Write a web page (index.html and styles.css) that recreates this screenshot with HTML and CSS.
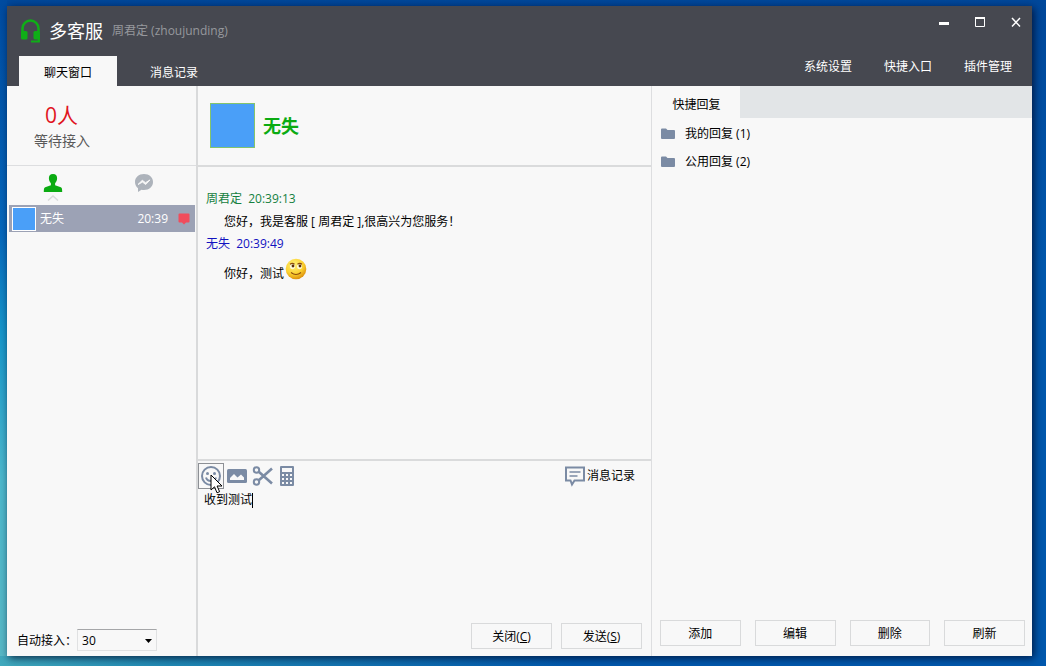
FILE: index.html
```html
<!DOCTYPE html>
<html lang="zh-CN">
<head>
<meta charset="utf-8">
<title>多客服</title>
<link rel="stylesheet" href="styles.css">
</head>
<body>
<div class="window">
  <header class="header">
    <div class="titlebar">
      <svg class="logo" viewBox="0 0 22 26" width="22" height="26">
        <path d="M2.500 15V10.500a8 8 0 0 1 16 0V15" fill="none" stroke="#0fae17" stroke-width="2.600"/>
        <rect x="1" y="13" width="6.500" height="8.500" rx="1.500" fill="#0fae17"/>
        <rect x="13.500" y="13" width="6.500" height="8.500" rx="1.500" fill="#0fae17"/>
        <path d="M18.800 20v3.500H11" fill="none" stroke="#0fae17" stroke-width="2.200"/>
      </svg>
      <h1 class="app-name">多客服</h1>
      <span class="account">周君定 (zhoujunding)</span>
      <div class="window-controls">
        <button class="control" aria-label="最小化"><svg viewBox="0 0 12 12" width="12" height="12"><path d="M1 7.500h10" stroke="#fff" stroke-width="3"/></svg></button>
        <button class="control" aria-label="最大化"><svg viewBox="0 0 12 12" width="12" height="12"><path d="M1.500 2v8.500h9V2" fill="none" stroke="#fff"/><path d="M1 2h10" stroke="#fff" stroke-width="2"/></svg></button>
        <button class="control" aria-label="关闭窗口"><svg viewBox="0 0 12 12" width="12" height="12"><path d="M2 2l8 8.500M10 2l-8 8.500" stroke="#fff" stroke-width="1.500"/></svg></button>
      </div>
    </div>
    <nav class="nav">
      <a class="tab tab-active" href="#chat">聊天窗口</a>
      <a class="tab" href="#history">消息记录</a>
      <div class="menu">
        <a href="#settings">系统设置</a>
        <a href="#shortcuts">快捷入口</a>
        <a href="#plugins">插件管理</a>
      </div>
    </nav>
  </header>
  <main class="main">
    <aside class="sidebar">
      <section class="waiting">
        <p class="waiting-count">0人</p>
        <p class="waiting-label">等待接入</p>
      </section>
      <div class="list-tabs">
        <button class="list-tab" aria-label="客户">
          <svg viewBox="0 0 20 20" width="20" height="20"><path d="M10 1c3 0 4.300 2 4.100 4.600-.1 2.200-1 3.600-2 4.700v1.900l5.700 2c1.100.5 1.400 1.400 1.400 4.800H.8c0-3.400.3-4.300 1.400-4.800l5.700-2v-1.900c-1-1.100-1.900-2.500-2-4.700C5.700 3 7 1 10 1z" fill="#0bab12"/></svg>
          <svg class="list-mark" viewBox="0 0 12 6" width="12" height="6"><path d="M1 5.500L6 1l5 4.500" fill="none" stroke="#d9dadb" stroke-width="1.500"/></svg>
        </button>
        <button class="list-tab" aria-label="会话">
          <svg viewBox="0 0 20 20" width="20" height="20"><path d="M10 1c5.200 0 9 3.400 9 8s-3.800 8-9 8c-.9 0-1.700-.1-2.500-.3L4 19v-3.800C2.100 13.700 1 11.500 1 9c0-4.600 3.800-8 9-8z" fill="#adb3bb"/><path d="M4 11.500l4.300-4.200 3.200 2.400 4.500-2.800-4.300 4.600-3.200-2.400z" fill="#f8f8f8" stroke="#f8f8f8"/></svg>
        </button>
      </div>
      <button class="contact">
        <span class="contact-avatar"></span>
        <span class="contact-name">无失</span>
        <span>20:39</span>
        <svg viewBox="0 0 12 12" width="12" height="12"><path d="M1.500.5h9q1 0 1 1v7q0 1-1 1H8l-2 2-2-2H1.500q-1 0-1-1v-7q0-1 1-1z" fill="#f04c5c"/></svg>
      </button>
      <div class="auto-accept">
        <label for="auto">自动接入<span class="punct">：</span></label>
        <span class="select-box">
          <select id="auto"><option>30</option></select>
          <svg class="select-arrow" viewBox="0 0 7 4" width="7" height="4"><path d="M0 0h7L3.500 4z" fill="#000"/></svg>
        </span>
      </div>
    </aside>
    <section class="chat">
      <div class="chat-head">
        <span class="chat-avatar"></span>
        <h2 class="chat-name">无失</h2>
      </div>
      <div class="messages">
        <p class="sender sender-self">周君定&nbsp; 20:39:13</p>
        <p class="message">您好，我是客服 [ 周君定 ],很高兴为您服务<span class="punct">！</span></p>
        <p class="sender sender-peer">无失&nbsp; 20:39:49</p>
        <p class="message message-emoji">你好，测试<svg class="emoji" viewBox="0 0 22 22" width="22" height="22">
          <defs><radialGradient id="face" cx=".4" cy=".3" r=".75"><stop offset="0" stop-color="#fff27a"/><stop offset=".6" stop-color="#fbd02f"/><stop offset="1" stop-color="#d88708"/></radialGradient></defs>
          <circle cx="11" cy="11" r="10.300" fill="url(#face)"/>
          <ellipse cx="7.500" cy="8.500" rx="2.500" ry="2.800" fill="#fffbd8"/><ellipse cx="14.500" cy="8.500" rx="2.500" ry="2.800" fill="#fffbd8"/>
          <path d="M5 6.300q2.300-1.800 4.500 0M12.500 6.300q2.300-1.800 4.500 0M6 14.500q5 4 10 0" fill="none" stroke="#8d4d0c" stroke-width="1.200"/>
          <circle cx="8" cy="8" r="1.400" fill="#5b2e08"/><circle cx="15" cy="8" r="1.400" fill="#5b2e08"/>
        </svg></p>
      </div>
      <div class="composer">
        <div class="toolbar">
          <button class="tool tool-hover" aria-label="表情">
            <svg viewBox="0 0 22 22" width="22" height="22"><g fill="none" stroke="#7b8ba4" stroke-width="2"><circle cx="11" cy="11" r="9"/><path d="M6 12.500q1 3.500 5 3.500t5-3.500"/></g><circle cx="7.500" cy="8.500" r="1.500" fill="#7b8ba4"/><circle cx="14.500" cy="8.500" r="1.500" fill="#7b8ba4"/></svg>
            <svg class="pointer" viewBox="0 0 13 20" width="13" height="20"><path d="M1 1v15l3.500-3.200 2.500 6 2.600-1.100-2.500-5.700H12z" fill="#fff" stroke="#000"/></svg>
          </button>
          <button class="tool" aria-label="图片">
            <svg viewBox="0 0 22 22" width="22" height="22"><rect x="1" y="4" width="20" height="14" rx="1.500" fill="#7b8ba4"/><path d="M4 15v-2l4-4 3.500 3.500 3.500-3L18 12.500V15z" fill="#f8f8f8"/></svg>
          </button>
          <button class="tool" aria-label="截图">
            <svg viewBox="0 0 22 22" width="22" height="22"><g fill="none" stroke="#7b8ba4" stroke-width="2"><circle cx="4.500" cy="5" r="2.700"/><circle cx="4.500" cy="17" r="2.700"/><path d="M6.800 6.700L20 18.500M6.800 15.300L20 3.500" stroke-width="2.600"/></g></svg>
          </button>
          <button class="tool tool-calc" aria-label="计算器">
            <svg viewBox="0 0 16 22" width="16" height="22"><path fill-rule="evenodd" d="M2 1h12q1 0 1 1v18q0 1-1 1H2q-1 0-1-1V2q0-1 1-1zM3 3v4h10V3zM3 9v2h2V9zM7 9v2h2V9zM11 9v2h2V9zM3 13v2h2v-2zM7 13v2h2v-2zM11 13v2h2v-2zM3 17v2h2v-2zM7 17v2h2v-2zM11 17v2h2v-2z" fill="#7b8ba4"/></svg>
          </button>
          <button class="history">
            <svg viewBox="0 0 22 22" width="22" height="22"><path d="M2 2.500h18v13H10.500L8 19.500l-1.500-4H2z" fill="none" stroke="#7b8ba4" stroke-width="2"/><path d="M5.500 7h11M5.500 11h8" stroke="#7b8ba4" stroke-width="1.500"/></svg>
            消息记录
          </button>
        </div>
        <div class="editor">
          <textarea class="input" aria-label="消息">收到测试</textarea>
          <span class="caret"></span>
        </div>
        <div class="chat-actions">
          <button class="btn">关闭(<u>C</u>)</button>
          <button class="btn">发送(<u>S</u>)</button>
        </div>
      </div>
    </section>
    <aside class="replies">
      <div class="replies-tabs"><button class="replies-tab">快捷回复</button></div>
      <ul class="folders">
        <li class="folder"><svg viewBox="0 0 14 12" width="14" height="12"><path d="M0 1.500Q0 .5 1 .5h4l1.500 1.500H13q1 0 1 1V10q0 1-1 1H1q-1 0-1-1z" fill="#7b8ba4"/></svg>我的回复 (1)</li>
        <li class="folder"><svg viewBox="0 0 14 12" width="14" height="12"><path d="M0 1.500Q0 .5 1 .5h4l1.500 1.500H13q1 0 1 1V10q0 1-1 1H1q-1 0-1-1z" fill="#7b8ba4"/></svg>公用回复 (2)</li>
      </ul>
      <div class="replies-actions">
        <button class="btn">添加</button>
        <button class="btn">编辑</button>
        <button class="btn">删除</button>
        <button class="btn">刷新</button>
      </div>
    </aside>
  </main>
</div>
</body>
</html>
```
FILE: styles.css
```css
* { box-sizing: border-box; margin: 0; padding: 0; }
body {
  height: 100vh;
  padding: 6px 14px 10px 7px;
  font: 12px/22px "Open Sans", "Noto Sans CJK SC", sans-serif;
  color: #000;
  background:
    linear-gradient(90deg, #40a9bd 0, #2089b4 16%, transparent 55%) bottom / 100% 10px no-repeat,
    linear-gradient(180deg, #004ba0 0, #0568bd 35%, #1697cb 50%, #4db9cd 72%, #58b9c6 100%) left / 7px 100% no-repeat,
    linear-gradient(180deg, #00489b, #0058ad 40%, #0058ad);
}
button, select, textarea { font: inherit; color: inherit; background: none; border: 0; }
a { color: inherit; text-decoration: none; }
svg { display: block; flex: none; }
.punct { font-family: "Noto Sans CJK TC", sans-serif; }
.window { height: 100%; display: flex; flex-direction: column; background: #f8f8f8; box-shadow: 2px 2px 8px rgba(0, 10, 40, .8); }

.header { background: #464850; color: #fff; }
.titlebar { height: 50px; display: flex; align-items: center; padding-left: 13px; }
.logo { margin-right: 7px; }
.app-name { font-size: 18px; font-weight: 400; margin-right: 9px; }
.account { color: #96989d; }
.window-controls { display: flex; gap: 4px; margin-left: auto; align-self: flex-start; }
.control { width: 32px; height: 32px; display: grid; place-items: center; }
.nav { height: 30px; display: flex; padding-left: 12px; }
.tab { width: 98px; padding-top: 6px; text-align: center; }
.tab + .tab { width: 114px; }
.tab-active { background: #f8f8f8; color: #000; }
.menu { margin-left: auto; display: flex; gap: 32px; padding-right: 20px; }

.main { flex: 1; min-height: 0; display: flex; }
.sidebar { width: 191px; display: flex; flex-direction: column; border-right: 2px solid #d9dadb; }
.waiting { height: 80px; padding: 16px 0 0 27px; border-bottom: 1px solid #dddee0; color: #5a5a5a; }
.waiting-count { padding-left: 11px; font-size: 21px; line-height: 26px; color: #e0141e; }
.waiting-label { font-size: 14px; line-height: 26px; }
.list-tabs { height: 39px; display: grid; grid-template-columns: 1fr 1fr; padding: 7px 6px 0 0; }
.list-tab { display: flex; flex-direction: column; align-items: center; gap: 2px; }
.contact { height: 27px; margin: 0 1px 0 2px; padding: 0 5px 0 3px; display: flex; align-items: center; background: #9ca2b5; color: #fff; text-align: left; }
.contact-avatar { width: 24px; height: 24px; margin-right: 4px; background: #4a9ff8; border: 1px solid #fff; }
.contact-name { flex: 1; }
.contact svg { margin-left: 10px; }
.auto-accept { margin-top: auto; padding: 0 39px 4px 10px; display: flex; align-items: center; }
.auto-accept label { white-space: nowrap; }
.select-box { position: relative; flex: 1; }
.select-box select { width: 100%; height: 22px; padding-left: 4px; appearance: none; border: 1px solid #e0e1e2; border-top-color: #a5a6a8; }
.select-arrow { position: absolute; right: 5px; top: 10px; pointer-events: none; }

.chat { flex: 1; min-width: 0; display: flex; flex-direction: column; border-right: 1px solid #dddee0; }
.chat-head { height: 81px; padding-left: 12px; display: flex; align-items: center; gap: 8px; border-bottom: 2px solid #dadbdc; }
.chat-avatar { width: 45px; height: 45px; background: #4a9ff8; border: 1px solid #84c46c; }
.chat-name { font-size: 18px; font-weight: 700; color: #0bab12; }
.messages { flex: 1; min-height: 0; padding: 21px 8px; }
.sender-self { color: #15803f; }
.sender-peer { color: #1212c0; }
.message { padding-left: 18px; }
.message-emoji { display: flex; align-items: center; line-height: 38px; }
.emoji { margin: 0 0 10px 1px; }
.composer { height: 197px; display: flex; flex-direction: column; border-top: 2px solid #dadbdc; }
.toolbar { display: flex; align-items: center; padding: 2px 16px 0 0; }
.tool { position: relative; width: 26px; height: 26px; display: grid; place-items: center; }
.tool-hover { border: 1px solid #8d9095; }
.tool-calc { width: 22px; }
.pointer { position: absolute; left: 11px; top: 10px; }
.history { margin-left: auto; display: flex; align-items: center; gap: 1px; }
.editor { position: relative; flex: 1; display: flex; }
.input { flex: 1; padding: 0 6px; resize: none; outline: 0; }
.caret { position: absolute; left: 54px; top: 4px; width: 1px; height: 15px; background: #000; }
.chat-actions { display: flex; justify-content: flex-end; gap: 9px; padding: 0 9px 7px; }
.btn { height: 26px; padding-top: 1px; border: 1px solid #d9dadb; }
.chat-actions .btn { width: 81px; }

.replies { width: 380px; display: flex; flex-direction: column; }
.replies-tabs { background: #e2e5e7; }
.replies-tab { width: 88px; height: 32px; padding-top: 6px; padding-left: 1px; background: #f8f8f8; }
.folders { flex: 1; list-style: none; padding: 2px 9px; line-height: 28px; }
.folder { display: flex; align-items: center; gap: 10px; }
.replies-actions { display: grid; grid-template-columns: repeat(4, 1fr); gap: 14px; padding: 0 7px 10px 8px; }
```
